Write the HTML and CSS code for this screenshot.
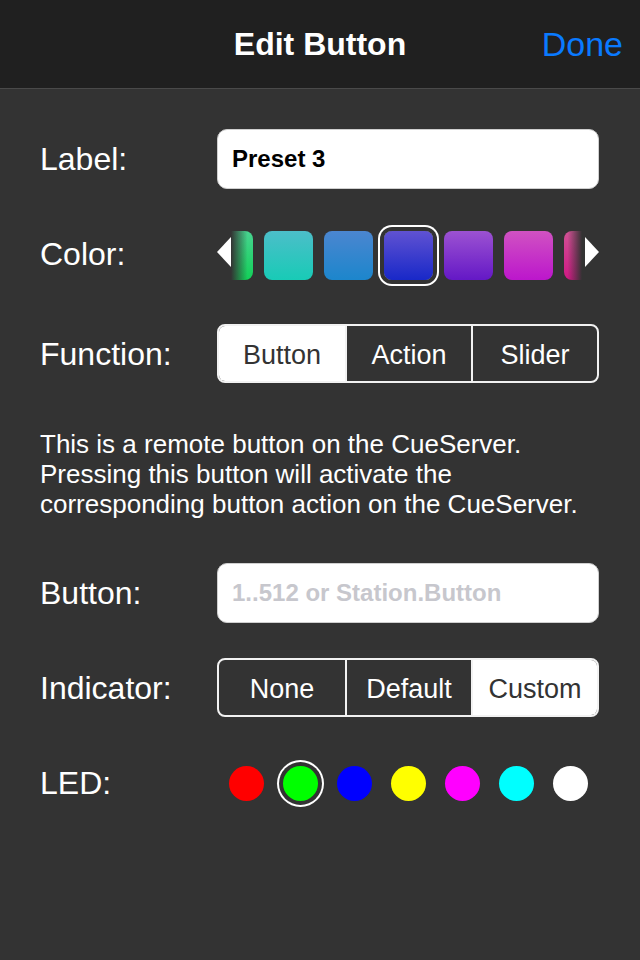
FILE: index.html
```html
<!DOCTYPE html>
<html lang="en">
<head>
    <meta charset="UTF-8">
    <meta name="viewport" content="width=device-width, initial-scale=1.0">
    <title>Edit Button</title>
    <link rel="stylesheet" href="styles.css">
</head>
<body>
    <div class="nav-bar">
        <span></span>
        <h1 class="nav-title">Edit Button</h1>
        <a class="nav-done" href="#">Done</a>
    </div>

    <div class="form">
        <div class="row row-label">
            <label class="row-name" for="label-input">Label:</label>
            <input class="text-field" type="text" id="label-input" value="Preset 3">
        </div>

        <div class="row row-color">
            <span class="row-name">Color:</span>
            <div class="color-picker">
                <svg class="arrow" width="14" height="30" viewBox="0 0 14 30"><polygon points="0,15 14,0 14,30" fill="#fff"/></svg>
                <div class="swatch swatch-edge-left swatch-green"></div>
                <div class="swatch swatch-teal"></div>
                <div class="swatch swatch-blue"></div>
                <div class="swatch swatch-indigo selected"></div>
                <div class="swatch swatch-purple"></div>
                <div class="swatch swatch-magenta"></div>
                <div class="swatch swatch-edge-right swatch-pink"></div>
                <svg class="arrow arrow-right" width="14" height="30" viewBox="0 0 14 30"><polygon points="14,15 0,0 0,30" fill="#fff"/></svg>
            </div>
        </div>

        <div class="row row-function">
            <span class="row-name">Function:</span>
            <div class="segmented">
                <div class="segment active">Button</div>
                <div class="segment">Action</div>
                <div class="segment">Slider</div>
            </div>
        </div>

        <p class="description">This is a remote button on the CueServer.<br>Pressing this button will activate the<br>corresponding button action on the CueServer.</p>

        <div class="row row-button">
            <label class="row-name" for="button-input">Button:</label>
            <input class="text-field" type="text" id="button-input" placeholder="1..512 or Station.Button">
        </div>

        <div class="row row-indicator">
            <span class="row-name">Indicator:</span>
            <div class="segmented">
                <div class="segment">None</div>
                <div class="segment">Default</div>
                <div class="segment active">Custom</div>
            </div>
        </div>

        <div class="row row-led">
            <span class="row-name">LED:</span>
            <div class="led-picker">
                <div class="led" style="background: #ff0000;"></div>
                <div class="led selected" style="background: #00ff00;"></div>
                <div class="led" style="background: #0000ff;"></div>
                <div class="led" style="background: #ffff00;"></div>
                <div class="led" style="background: #ff00ff;"></div>
                <div class="led" style="background: #00ffff;"></div>
                <div class="led" style="background: #ffffff;"></div>
            </div>
        </div>
    </div>
</body>
</html>
```

FILE: styles.css
```css
body {
    font-family: 'Liberation Sans', Arial, sans-serif;
    background: #333333;
    color: #fff;
    margin: 0;
    min-height: 960px;
}
.nav-bar {
    display: grid;
    grid-template-columns: 1fr auto 1fr;
    align-items: center;
    height: 88px;
    background: #202020;
    border-bottom: 1px solid #4a4a4a;
    padding: 0 17px;
}
.nav-title {
    margin: 0;
    font-size: 32px;
    font-weight: bold;
    color: #fff;
}
.nav-done {
    justify-self: end;
    color: #0a7aff;
    font-size: 34px;
    text-decoration: none;
}
.form {
    padding: 0 41px 0 40px;
}
.row {
    display: flex;
    align-items: center;
}
.row-name {
    width: 177px;
    flex-shrink: 0;
    font-size: 32px;
    line-height: 36px;
    color: #fff;
}
.row-label {
    margin-top: 40px;
}
.row-color {
    margin-top: 37px;
    height: 59px;
}
.row-color .row-name {
    margin-top: -4px;
}
.row-function {
    margin-top: 39px;
}
.row-button {
    margin-top: 44px;
}
.row-indicator {
    margin-top: 35px;
}
.row-led {
    margin-top: 43px;
    height: 46px;
}
.text-field {
    box-sizing: border-box;
    width: 382px;
    height: 60px;
    padding: 0 14px;
    border: 1px solid #cfcfcf;
    border-radius: 10px;
    background: #fff;
    font-family: inherit;
    font-size: 24px;
    font-weight: bold;
    color: #000;
    outline: none;
}
.text-field::placeholder {
    color: #c7c7cd;
}

/* color strip */
.color-picker {
    display: flex;
    align-items: center;
    width: 382px;
}
.arrow {
    display: block;
    margin-top: -7px;
}
.arrow-right {
    margin-left: 3px;
}
.swatch {
    width: 49px;
    height: 49px;
    border-radius: 8px;
    margin-left: 11px;
    flex-shrink: 0;
}
.swatch-edge-left {
    width: 22px;
    margin-left: 0;
    border-radius: 0 8px 8px 0;
}
.swatch-edge-right {
    width: 18px;
    border-radius: 8px 0 0 8px;
}
.swatch.selected {
    box-shadow: 0 0 0 4px #333, 0 0 0 6px #fff;
}
.swatch-green {
    background: linear-gradient(to right, #333 0%, rgba(51, 51, 51, 0) 75%), linear-gradient(#48d490, #12d058);
}
.swatch-teal {
    background: linear-gradient(#4cbec9, #18cbb6);
}
.swatch-blue {
    background: linear-gradient(#4b86d0, #1c86cc);
}
.swatch-indigo {
    background: linear-gradient(#6052d2, #1828c8);
}
.swatch-purple {
    background: linear-gradient(#9c52d2, #6418c6);
}
.swatch-magenta {
    background: linear-gradient(#d052c2, #bc16cc);
}
.swatch-pink {
    background: linear-gradient(to left, #333 0%, rgba(51, 51, 51, 0) 80%), linear-gradient(#d05294, #d01884);
}

/* segmented controls */
.segmented {
    box-sizing: border-box;
    display: grid;
    grid-template-columns: 1fr 1fr 1fr;
    width: 382px;
    height: 59px;
    border: 2px solid #f2f2f2;
    border-radius: 8px;
    overflow: hidden;
}
.segment {
    display: flex;
    align-items: center;
    justify-content: center;
    padding-top: 3px;
    font-size: 27px;
    color: #fff;
}
.segment + .segment {
    border-left: 2px solid #f2f2f2;
}
.segment.active {
    background: #fff;
    color: #333;
}

.description {
    margin: 46px 0 0;
    font-size: 26px;
    line-height: 30px;
    color: #fff;
}

/* led dots */
.led-picker {
    display: flex;
    justify-content: center;
    gap: 19px;
    width: 382px;
}
.led {
    width: 35px;
    height: 35px;
    border-radius: 50%;
}
.led.selected {
    box-shadow: 0 0 0 4px #333, 0 0 0 6px #fff;
}
```
